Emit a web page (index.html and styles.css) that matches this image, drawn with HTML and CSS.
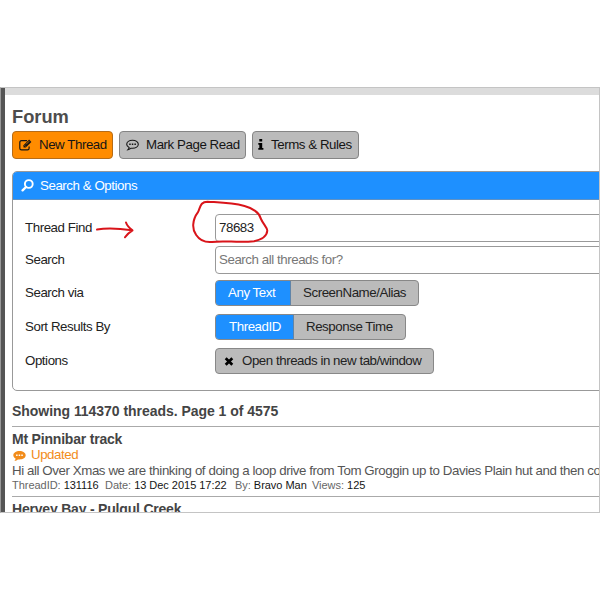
FILE: index.html
```
<!DOCTYPE html>
<html lang="en">
<head>
<meta charset="utf-8">
<title>Forum</title>
<link rel="stylesheet" href="styles.css">
</head>
<body>
<main class="window">
  <div class="topband"></div>
  <div class="content">
    <h1>Forum</h1>
    <div class="toolbar">
      <button class="btn primary new"><svg class="icon" width="13" height="12" viewBox="0 0 13 12"><path d="M8 1.700H2.500Q.8 1.700.8 3.400v5.800q0 1.600 1.700 1.600h6q1.600 0 1.600-1.600V7.500" fill="none" stroke="currentColor" stroke-width="1.200"/><path d="M4.500 6.200 10.100.6l2.300 2.300-5.600 5.600H4.500z" fill="currentColor"/><path d="m5.600 6.400 1.100 1.100M7 5.400l3.200-3.200" stroke="#ff8c00" stroke-width=".7"/></svg><span>New Thread</span></button>
      <button class="btn mark"><svg class="icon" width="13" height="12" viewBox="0 0 13 12"><path d="M6.500 1.200C3.200 1.200.7 3 .7 5.300c0 1.400.9 2.600 2.400 3.300-.1.900-.5 1.500-1.100 2.100 1.400-.2 2.400-.8 3.100-1.500l1.400.1c3.300 0 5.800-1.800 5.800-4S9.800 1.200 6.500 1.200z" fill="none" stroke="currentColor" stroke-width="1.100"/><path d="M3.200 4.500h1.500v1.500H3.200zM5.800 4.500h1.500v1.500H5.800zM8.400 4.500h1.500v1.500H8.400z" fill="currentColor"/></svg><span>Mark Page Read</span></button>
      <button class="btn terms"><svg class="icon" width="6" height="11" viewBox="0 0 6 11"><path d="M1.300.1h2.900v2.500H1.300zM.3 3.900h3.900v5h1.200v1.800H.3V8.900h1V5.700h-1z" fill="#000"/></svg><span>Terms &amp; Rules</span></button>
    </div>
    <section class="panel">
      <header class="panel-head"><svg class="icon" width="13" height="13" viewBox="0 0 13 13"><circle cx="7.800" cy="5" r="3.900" fill="none" stroke="currentColor" stroke-width="1.900"/><path d="m5 8-3.400 3.300" stroke="currentColor" stroke-width="2.400" stroke-linecap="round"/></svg><span>Search &amp; Options</span></header>
      <div class="panel-body">
        <div class="row find"><label>Thread Find</label><div class="field"><span>78683</span></div></div>
        <div class="row search"><label>Search</label><div class="field hint"><span>Search all threads for?</span></div></div>
        <div class="row"><label>Search via</label><div class="group"><span class="seg on any">Any Text</span><span class="seg alias">ScreenName/Alias</span></div></div>
        <div class="row"><label>Sort Results By</label><div class="group"><span class="seg on tid">ThreadID</span><span class="seg resp">Response Time</span></div></div>
        <div class="row"><label>Options</label><div class="group"><span class="seg open"><svg class="icon" width="10" height="9" viewBox="0 0 10 9"><path d="m1.700 1.200 6.600 6.600m0-6.600L1.700 7.800" stroke="currentColor" stroke-width="2.700"/></svg>Open threads in new tab/window</span></div></div>
      </div>
    </section>
    <h2>Showing 114370 threads. Page 1 of 4575</h2>
    <article class="thread">
      <h3>Mt Pinnibar track</h3>
      <div class="updated"><svg class="icon" width="13" height="12" viewBox="0 0 13 12"><path d="M6.500 1C3 1 .3 2.900.3 5.300c0 1.300.9 2.500 2.300 3.300-.1.900-.5 1.500-1.200 2.300 1.500-.2 2.700-.8 3.500-1.500l1.600.1c3.500 0 6.200-1.800 6.200-4.200S10 1 6.500 1z" fill="currentColor"/><path d="M3.100 4.500h1.500V6H3.100zM5.700 4.500h1.500V6H5.700zM8.300 4.500h1.500V6H8.300z" fill="#fff"/></svg><span>Updated</span></div>
      <p class="excerpt">Hi all Over Xmas we are thinking of doing a loop drive from Tom Groggin up to Davies Plain hut and then co</p>
      <div class="meta"><span class="m1">ThreadID: <b>131116</b></span><span class="m2">Date: <b>13 Dec 2015 17:22</b></span><span class="m3">By: <b>Bravo Man</b></span><span class="m4">Views: <b>125</b></span></div>
    </article>
    <article class="thread"><h3>Hervey Bay - Pulgul Creek</h3></article>
  </div>
  <svg class="markup" width="600" height="426" viewBox="0 87 600 426" fill="none" stroke="#d9141a" stroke-width="2" stroke-linecap="round" stroke-linejoin="round"><path d="M97 229.500c9-1.600 20-1.400 35 .8M126 222.500c1 3 4 6 6.500 7.800-3 1.800-5.500 4-7.500 7"/><path d="M260.500 218c-1-5-8-10-16-12-13-3.500-24-3.500-37-4.300-7 0-7 5-9.500 10.500-6 8-6 17-2 22.500 4 6 9 8 16 7.300 12-1.800 26 1 42-.8 8-1.700 13-5.500 13.300-10.700-.3-3.500-4.300-6.500-6.800-12.500z"/></svg>
</main>
</body>
</html>
```
FILE: styles.css
```
* { box-sizing: border-box; }
body { margin: 0; padding-top: 87px; height: 600px; background: #fff; font: 13.300px/16px "Liberation Sans", Arial, sans-serif; letter-spacing: -.44px; color: #222; overflow: hidden; }
span, label, p { white-space: nowrap; }
.window { position: relative; height: 426px; border: 1px solid #c4c4c4; border-left-color: #999; overflow: hidden; box-shadow: inset 4px 0 #555; }
.topband { height: 7px; margin-left: 4px; background: #dcdcdc; }
.content { padding-left: 11px; }
.icon { flex: none; display: block; }
h1 { margin: 11px 0 4px; height: 21px; font-size: 18.300px; line-height: 21px; letter-spacing: 0; color: #4d4d4d; }
.toolbar { display: flex; gap: 6px; height: 28px; }
.btn { display: flex; align-items: center; height: 28px; padding: 0 0 0 6px; border: 1px solid #858585; border-radius: 4px; background: #bbb; color: #151515; font: inherit; letter-spacing: inherit; }
.btn.primary { background: #ff8c00; border-color: #b66c17; }
.new { width: 101px; }
.mark { width: 127px; }
.btn.terms { width: 107px; padding-left: 5px; }
.new .icon, .mark .icon { margin: 0 7px 0 0; }
.terms .icon { margin: 0 7px 1px 0; }
.panel { margin-top: 12px; height: 220px; width: 610px; border: 1px solid #999; border-radius: 5px; overflow: hidden; }
.panel-head { display: flex; align-items: center; height: 28px; padding-left: 8px; background: #1e90ff; color: #fff; border-bottom: 1px solid #6192c4; }
.panel-head .icon { margin-right: 6px; }
.panel-body { padding: 13px 0 0 12px; }
.row { display: flex; align-items: center; height: 34px; }
.row.find { height: 29px; margin-bottom: 3px; }
.row.search { height: 29px; margin-bottom: 2px; }
.row label { width: 190px; flex: none; padding-bottom: 1px; }
.row.find label, .row.search label { padding-bottom: 0; }
.field { display: flex; align-items: center; width: 420px; height: 28px; padding-left: 3px; border: 1px solid #999; border-radius: 4px; }
.hint { color: #777; }
.group { display: flex; height: 26px; border: 1px solid #888; border-radius: 4px; overflow: hidden; background: #bbb; }
.seg { display: flex; align-items: center; padding: 0 0 0 12px; }
.seg.on { background: #1e90ff; color: #fff; border-right: 1px solid #6084a8; }
.any { width: 75px; }
.alias { width: 127px; }
.tid { width: 78px; padding-left: 13px; }
.resp { width: 111px; }
.open { width: 217px; padding-left: 8px; letter-spacing: -.45px; }
.open .icon { margin-right: 8px; color: #000; }
h2 { margin: 12px 0 0; height: 24px; font-size: 14px; line-height: 17px; letter-spacing: -.04px; color: #444; border-bottom: 1px solid #aaa; }
h3 { margin: 0; font-size: 14px; line-height: 16px; letter-spacing: -.2px; color: #444; }
.thread { height: 70px; padding-top: 4px; border-bottom: 1px solid #aaa; }
.updated { display: flex; align-items: center; height: 16px; color: #f28c1a; }
.updated .icon { margin: 1px 5px 0 1px; }
.excerpt { margin: 0; height: 16px; letter-spacing: -.415px; color: #555; }
.meta { display: flex; height: 13px; font-size: 11px; line-height: 12px; letter-spacing: -.03px; color: #666; }
.meta b { font-weight: normal; color: #151515; }
.m1 { width: 93px; }
.m2 { width: 130px; }
.m3 { width: 77px; }
.markup { position: absolute; left: -1px; top: -1px; }
```
